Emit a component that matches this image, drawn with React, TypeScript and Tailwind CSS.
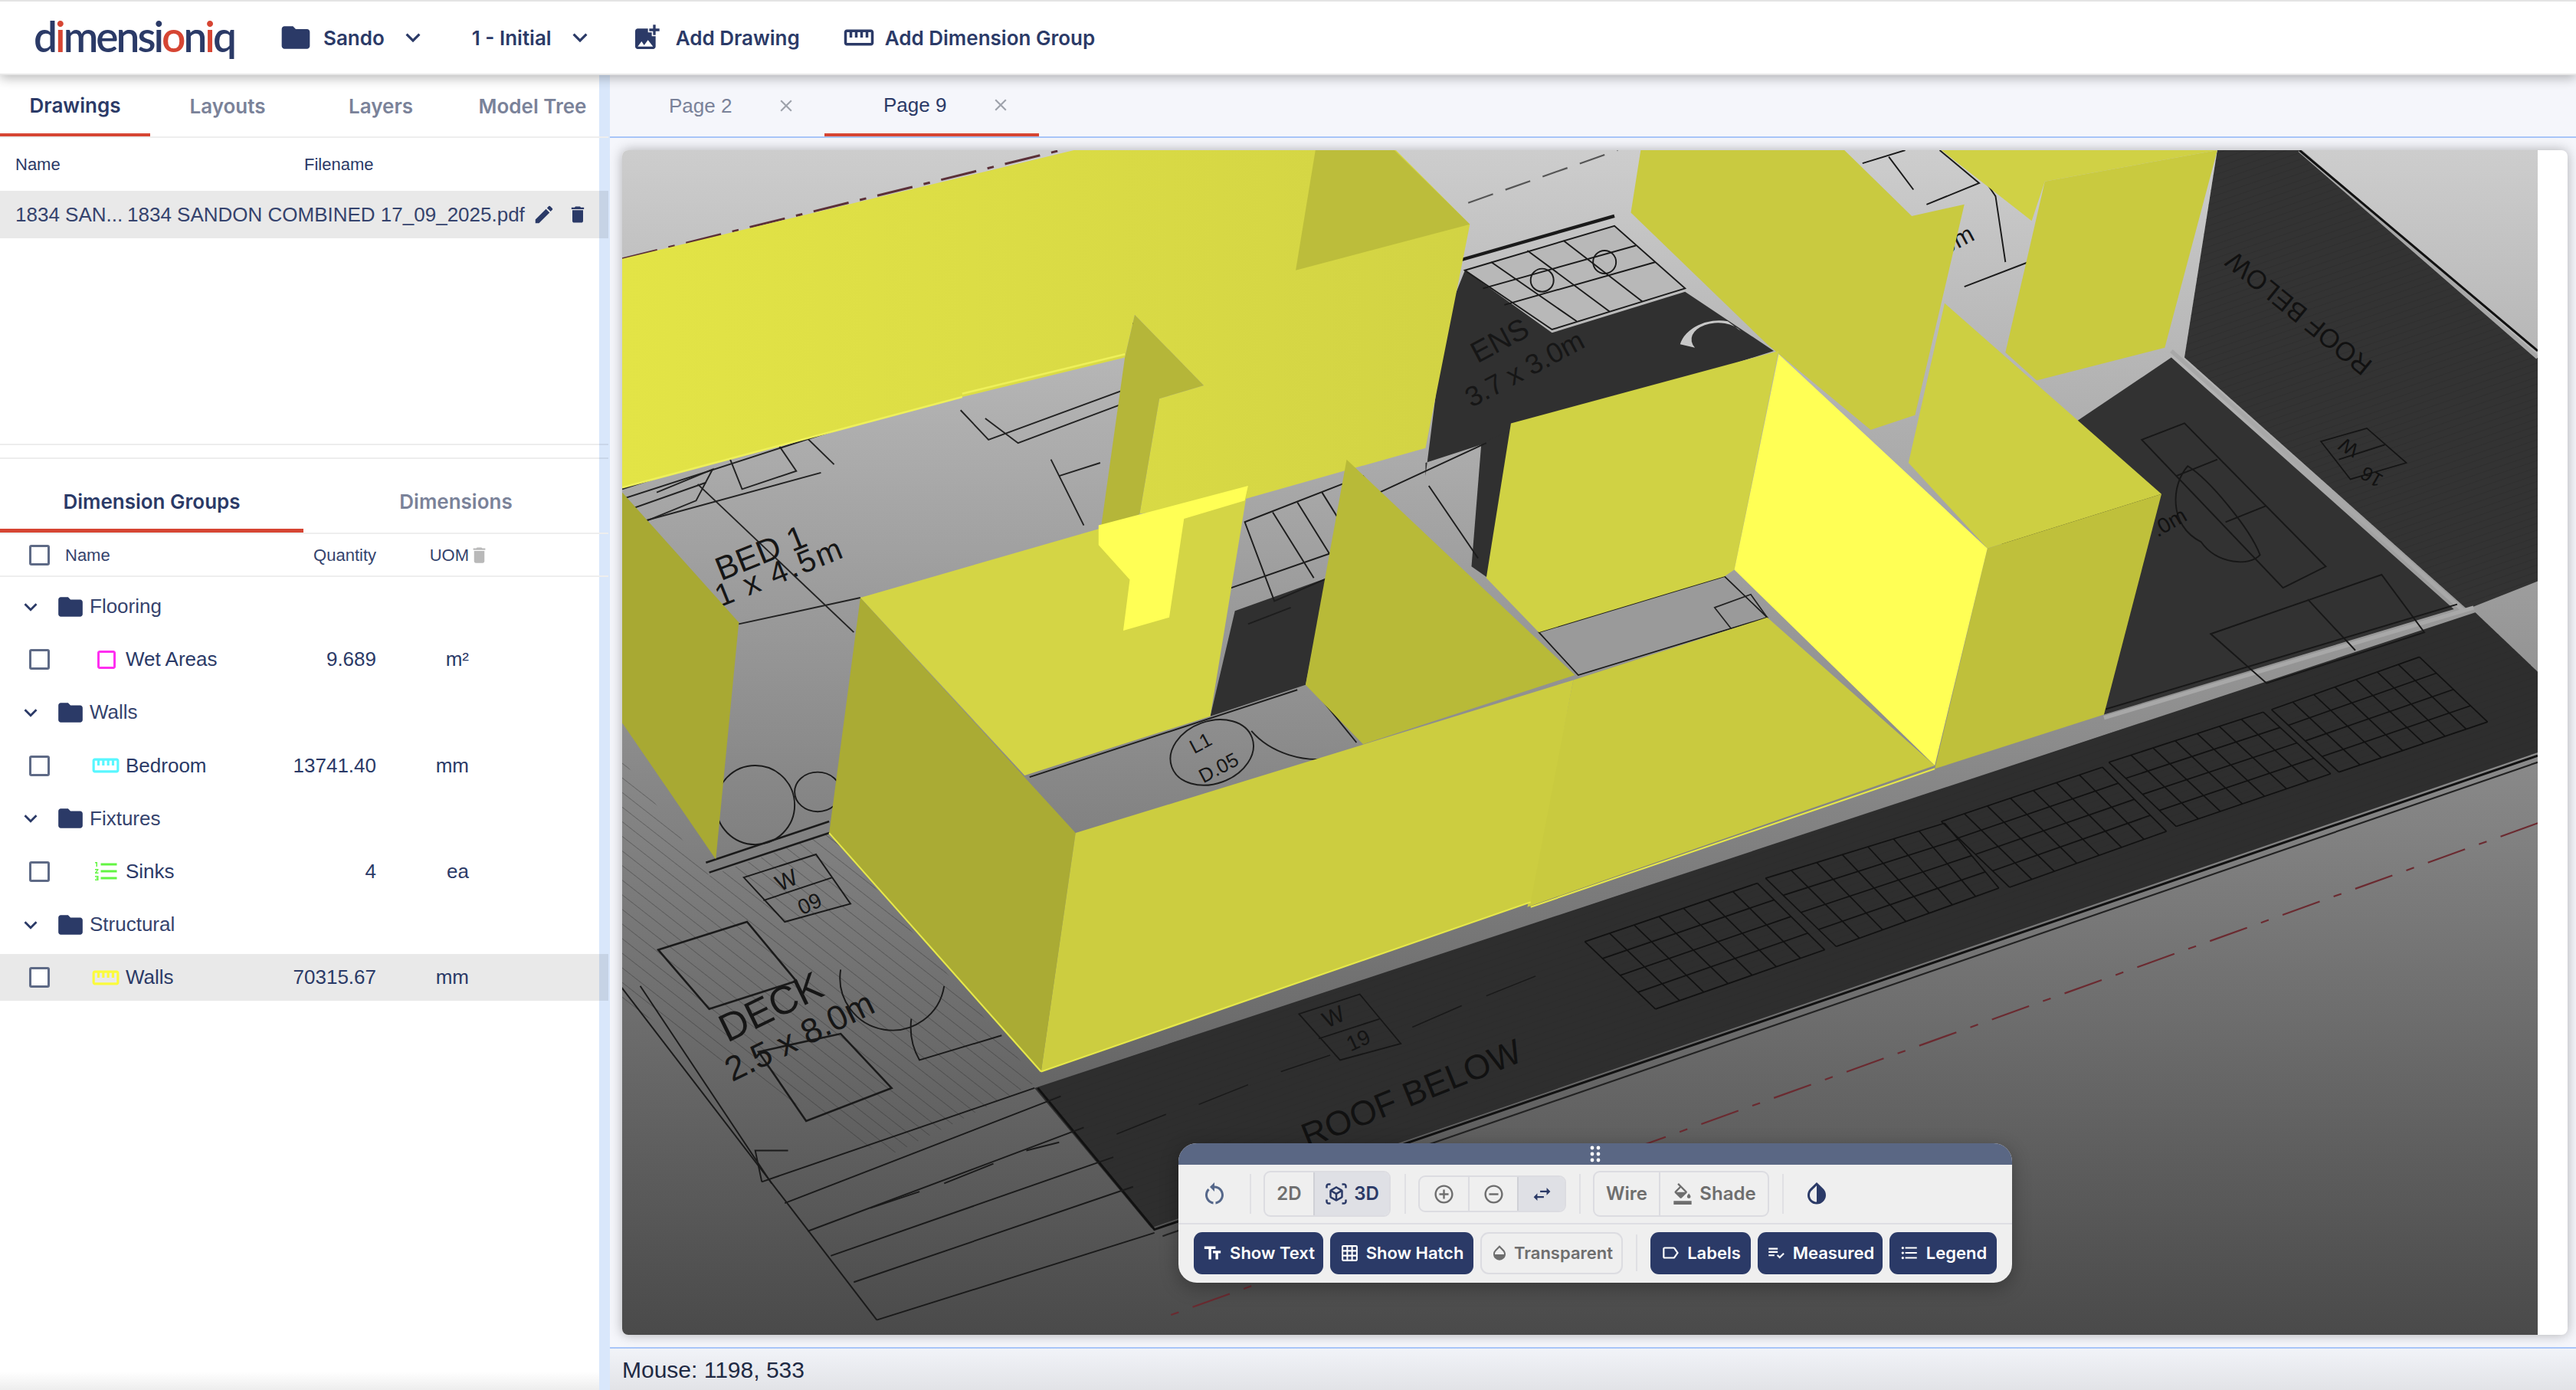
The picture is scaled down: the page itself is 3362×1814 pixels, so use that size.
import {
  MdFolder, MdKeyboardArrowDown, MdOutlineStraighten, MdEdit, MdDelete, MdCropSquare,
  MdFormatListNumbered, MdStraighten, MdRestartAlt, MdOutlineViewInAr, MdAddCircleOutline,
  MdRemoveCircleOutline, MdSwapHoriz, MdFormatColorFill, MdInvertColors, MdTextFields,
  MdGridOn, MdOpacity, MdOutlineLabel, MdPlaylistAddCheck, MdFormatListBulleted, MdClose,
  MdAddPhotoAlternate,
} from "react-icons/md";

const body = "font-['Liberation_Sans',Arial,sans-serif]";
const ui = "font-['Inter',sans-serif]";

// walls, back to front. Coordinates are in the drawing's own space
const backWalls = [
  { p: "999,92 1123,92 1164,132 1196,125 1166,253 1139,262 1076,210 993,130", c: "#c9ca40" },
  { p: "1182,92 1350,92 1245,111 1237,135", c: "#d0d145" },
  { p: "1245,111 1350,92 1318,212 1240,232 1221,215", c: "#c9ca3f" },
];

const frontWalls = [
  { p: "379,300 450,379 436,523 379,440", c: "#a8a933" },
  { p: "920,258 1083,214 1056,347 1050,351 937,385 905,352", c: "#d0d244" },
  { p: "1184,185 1316,301 1210,334 1162,282", c: "#cdcf42" },
  { p: "1210,334 1316,301 1281,435 1178,468", c: "#bfc03b" },
  { p: "524,364 760,296 737,436 624,472", c: "#d4d545" },
  { p: "669,320 760,296 758,305 721,316 712,376 684,384 688,353 669,332", c: "#ffff55" },
  { p: "820,280 959,411 830,453 795,417", c: "#b8ba38" },
  { p: "1083,216 1210,334 1178,466 1056,347", c: "#ffff55" },
  { p: "958,414 1076,376 1178,466 930,552", c: "#c9ca3f" },
  { p: "524,364 655,507 634,652 505,507", c: "#aaab34" },
  { p: "655,507 958,414 932,549 634,652", c: "#cccd40" },
];

const panels = [
  [[965, 573], [1070, 537.5], [1111, 578], [1008, 614]],
  [[1075, 534.5], [1184, 501], [1217, 540.5], [1118, 576]],
  [[1182, 500], [1280, 467], [1319, 506], [1223.5, 540]],
  [[1284, 464], [1378, 433.5], [1419, 471], [1325, 503]],
  [[1383, 432], [1473, 400], [1514.5, 439.5], [1424, 470]],
];

function lerp(a: number[], b: number[], t: number) {
  return [a[0] + (b[0] - a[0]) * t, a[1] + (b[1] - a[1]) * t];
}

function GridPanel({ c, nx = 7, ny = 4 }: { c: number[][]; nx?: number; ny?: number }) {
  const lines = [];
  for (let i = 0; i <= nx; i++) {
    const a = lerp(c[0], c[1], i / nx);
    const b = lerp(c[3], c[2], i / nx);
    lines.push(<line key={`x${i}`} x1={a[0]} y1={a[1]} x2={b[0]} y2={b[1]} />);
  }
  for (let i = 0; i <= ny; i++) {
    const a = lerp(c[0], c[3], i / ny);
    const b = lerp(c[1], c[2], i / ny);
    lines.push(<line key={`y${i}`} x1={a[0]} y1={a[1]} x2={b[0]} y2={b[1]} />);
  }
  return <g stroke="#111" strokeWidth="0.8">{lines}</g>;
}

function Plan() {
  return (
    <svg viewBox="379 92 1166 720" className="w-[2500px] h-full shrink-0" preserveAspectRatio="none">
      <defs>
        <linearGradient id="floor" x1="0" y1="0" x2="0" y2="1">
          <stop offset="0" stopColor="#cdcdcd" />
          <stop offset="1" stopColor="#4a4a4a" />
        </linearGradient>
        <linearGradient id="bigWall" x1="379" y1="0" x2="895" y2="0" gradientUnits="userSpaceOnUse">
          <stop offset="0" stopColor="#e3e446" />
          <stop offset="1" stopColor="#d2d344" />
        </linearGradient>
        <pattern id="boards" width="7" height="7" patternUnits="userSpaceOnUse" patternTransform="rotate(-52)">
          <line x1="0" y1="0" x2="0" y2="7" stroke="#1c1c1c" strokeWidth="0.5" />
        </pattern>
        <pattern id="roof" width="4" height="4" patternUnits="userSpaceOnUse" patternTransform="rotate(-19)">
          <line x1="0" y1="0" x2="4" y2="0" stroke="#2a2a2a" strokeWidth="0.5" />
        </pattern>
      </defs>
      <rect x="379" y="92" width="1166" height="720" fill="url(#floor)" />

      {/* site boundary */}
      <line x1="379" y1="158" x2="646" y2="92" stroke="#5b3038" strokeWidth="1.4" strokeDasharray="22 7 4 7" />
      <line x1="894" y1="124" x2="985" y2="92" stroke="#555" strokeWidth="1" strokeDasharray="16 8" />
      <line x1="1545" y1="501" x2="710" y2="801" stroke="#6b2a30" strokeWidth="1" strokeDasharray="24 9 5 9" />

      {/* dark roof and rooms */}
      <polygon points="1350,92 1400,92 1545,218 1545,354 1502,371 1330,218" fill="#333" />
      <polygon points="1322,218 1494,371 1281,435 1200,300" fill="#323232" />
      <polygon points="630,662 1507,373 1545,409 1545,458 701,747" fill="#2e2e2e" />
      <polygon points="868,290 880,195 892,165 945,203 1026,178 1080,214 905,270 868,282" fill="#303030" />
      <polygon points="902,270 921,262 906,352 896,345" fill="#303030" />
      <polygon points="752,372 808,352 795,417 737,436" fill="#303030" />
      <polygon points="1350,92 1400,92 1545,218 1545,354 1502,371 1330,218" fill="url(#roof)" />
      <polygon points="630,662 1507,373 1545,409 1545,458 701,747" fill="url(#roof)" />

      <g fill="none" stroke="#a8a8a8" strokeWidth="2.4">
        <path d="M1322,214 L1500,372" />
        <path d="M1281,437 L1506,370" />
        <path d="M1400,92 L1545,218" />
      </g>
      <path d="M1400,92 L1545,214 M632,662 L703,748 L1545,460" fill="none" stroke="#111" strokeWidth="1.4" />
      <path d="M708,752 L1545,464" fill="none" stroke="#222" strokeWidth="1" />

      {panels.map((c, i) => <GridPanel key={i} c={c} />)}

      {/* bedroom furniture */}
      <g fill="none" stroke="#222" strokeWidth="0.9">
        <path d="M379,298 L694,196 M379,304 L590,236" />
        <path d="M379,312 L430,294 M390,318 L500,288 M508,283 L470,246 L468,241" />
        <path d="M425,295 L520,385" />
        <path d="M585,250 L602,268 L700,232 L690,212 M600,255 L620,270 L700,240" />
        <path d="M444,278 L470,265 L485,287 L452,298 Z M400,300 L434,286 L424,305 L392,318" />
        <path d="M640,280 L660,320 M645,290 L670,282" />
        <path d="M450,380 L524,364" />
      </g>

      {/* stairs */}
      <g fill="none" stroke="#1d1d1d" strokeWidth="0.9">
        <path d="M758,318 L830,290 L860,330 L776,366 Z" />
        <path d="M775,312 L800,352 M790,306 L815,346 M805,300 L830,340 M820,296 L846,334" />
        <path d="M744,360 L816,335 M760,380 L786,370" />
        <path d="M870,296 L900,340 M840,300 L905,270" />
      </g>

      {/* ensuite */}
      <polygon points="892,165 983,138 1026,176 945,201" fill="#b8b8b8" />
      <g fill="none" stroke="#1a1a1a" strokeWidth="0.9">
        <path d="M892,165 L983,138 L1026,176 L945,201 Z" />
        <path d="M908,160 L960,196 M930,153 L980,190 M952,147 L1000,184 M903,176 L996,150 M916,186 L1008,160" />
        <circle cx="939" cy="171" r="7" />
        <circle cx="977" cy="160" r="7" />
        <path d="M885,160 L983,132" strokeWidth="2" />
      </g>
      <path d="M1023,210 A22,16 -10 0 1 1052,196 L1060,202 A16,10 0 0 0 1032,212 Z" fill="#c8c8c8" />

      {/* bedroom 2 at the top */}
      <g fill="none" stroke="#1a1a1a" strokeWidth="0.9">
        <path d="M1134,100 L1160,92 M1150,96 L1165,116 M1181,92 L1205,112 L1173,125" />
        <path d="M1196,92 L1215,120 L1221,160 M1196,175 L1235,160" />
      </g>

      {/* living room furniture */}
      <g fill="none" stroke="#171717" strokeWidth="0.9">
        <path d="M1304,268 L1330,258 L1416,345 L1390,358 Z M1325,290 L1350,280 M1355,318 L1380,308" />
        <path d="M1340,330 C1320,320 1322,295 1332,284 C1345,292 1370,322 1376,338 C1370,345 1350,344 1340,330 Z" />
        <path d="M1346,386 L1450,350 L1476,385 L1380,416 Z M1405,365 L1434,396" />
        <path d="M1281,432 L1496,368" />
        <path d="M1190,430 L1210,428" />
      </g>

      {/* small room between the walls */}
      <path d="M937,385 L1050,351 L1076,376 L961,411 Z" fill="#9a9a9a" stroke="#1a1a1a" strokeWidth="0.8" />
      <path d="M1044,370 L1066,362 L1076,376 L1055,384 Z" fill="none" stroke="#222" strokeWidth="0.8" />

      {/* door tag */}
      <g fill="none" stroke="#1d1d1d" strokeWidth="0.9">
        <ellipse cx="738" cy="458" rx="26" ry="19" transform="rotate(-20 738 458)" />
        <path d="M762,445 C775,460 795,463 806,462" />
        <path d="M627,473 L790,420 M800,420 L826,452" />
      </g>

      {/* deck */}
      <polygon points="379,462 432,533 505,507 632,658 540,704 379,610" fill="url(#boards)" opacity="0.55" />
      <g fill="none" stroke="#1a1a1a" strokeWidth="0.9">
        <circle cx="460" cy="490" r="24" />
        <ellipse cx="498" cy="482" rx="14" ry="12" />
        <path d="M432,531 L505,507 M430,525 L505,500" strokeWidth="1.2" />
        <path d="M453,534 L497,520 L518,550 L478,561 Z M465,548 L507,534" />
        <path d="M401,578 L455,561 L485,597 L432,614 Z" strokeWidth="1.2" />
        <path d="M462,640 L512,629 L543,662 L491,682 Z" strokeWidth="1.2" />
        <path d="M512,590 A30,30 0 0 0 575,600 M555,620 A40,40 0 0 0 560,645 L610,630" />
        <path d="M464,719 L630,662 M478,732 L646,667 M492,749 L660,686 M506,764 L678,704 M520,780 L690,722 M534,803 L703,750" />
        <path d="M378,600 L534,803" />
        <path d="M390,600 L470,720 M464,719 L460,700 L480,700" />
        <path d="M530,735 L560,725 M575,720 L605,708 M625,700 L645,695" />
      </g>
      <path d="M791,617 L828,605 L853,635 L816,645 Z M803,632 L840,620" fill="none" stroke="#161616" strokeWidth="0.8" />
      <path d="M1413,269 L1441,261 L1465,282 L1431,292 Z M1424,280 L1452,271" fill="none" stroke="#141414" strokeWidth="0.8" />

      {/* dimension lines across the lower roof */}
      <path d="M680,690 L710,678 M730,672 L760,660 M780,652 L810,642 M860,625 L890,612 M905,606 L935,594" fill="none" stroke="#191919" strokeWidth="0.7" />

      <g fontFamily="'Liberation Sans',Arial,sans-serif" fill="#161616" textAnchor="middle">
        <text transform="translate(466,343) rotate(-22)" fontSize="20">BED 1</text>
        <text transform="translate(468,358) rotate(-22)" fontSize="19" textLength="100">5.1 x 4.5m</text>
        <text transform="translate(916,213) rotate(-28)" fontSize="18">ENS</text>
        <text transform="translate(931,230) rotate(-28)" fontSize="17">3.7 x 3.0m</text>
        <text transform="translate(1192,152) rotate(-28)" fontSize="15">.0m</text>
        <text transform="translate(1323,322) rotate(-30)" fontSize="13" fill="#111">.0m</text>
        <text transform="translate(733,456) rotate(-28)" fontSize="12">L1</text>
        <text transform="translate(744,471) rotate(-28)" fontSize="12">D.05</text>
        <text transform="translate(481,540) rotate(-25)" fontSize="14">W</text>
        <text transform="translate(495,554) rotate(-25)" fontSize="13">09</text>
        <text transform="translate(473,620) rotate(-26)" fontSize="24">DECK</text>
        <text transform="translate(490,637) rotate(-26)" fontSize="21">2.5 x 8.0m</text>
        <text transform="translate(814,623) rotate(-25)" fontSize="14" fill="#141414">W</text>
        <text transform="translate(829,637) rotate(-25)" fontSize="13" fill="#141414">19</text>
        <text transform="translate(862,672) rotate(-22)" fontSize="21" fill="#111">ROOF BELOW</text>
        <text transform="translate(1403,187) rotate(-141)" fontSize="16" fill="#111">ROOF BELOW</text>
        <text transform="translate(1432,269) rotate(-150)" fontSize="12" fill="#111">W</text>
        <text transform="translate(1446,287) rotate(-150)" fontSize="12" fill="#111">16</text>
      </g>

      {/* extruded walls */}
      {backWalls.map((w) => <polygon key={w.p} points={w.p} fill={w.c} />)}
      <polygon
        points="379,158 654,92 850,92 895,137 868,273 758,304 694,313 706,243 733,235 691,192 685,218 586,242 379,297"
        fill="url(#bigWall)"
      />
      <polygon points="801,92 849,92 895,137 789,165" fill="#bcbd3b" />
      <polygon points="691,192 733,235 706,243 694,313 669,332 685,218" fill="#b5b639" />
      <path d="M379,297 L586,242 M586,240 L685,216" stroke="#eef05a" strokeWidth="1.2" fill="none" />
      {frontWalls.map((w) => <polygon key={w.p} points={w.p} fill={w.c} />)}
      <path d="M634,652 L932,549 M932,552 L1178,468 M505,507 L634,652" stroke="#e6e84a" strokeWidth="1" fill="none" />
    </svg>
  );
}

function Cell({ className, children }: { className: string; children?: React.ReactNode }) {
  return <div className={className}>{children}</div>;
}

function Check() {
  return <div className="w-[27px] h-[27px] ml-[38px] shrink-0 rounded-[3px] border-[3px] border-[#5e6a86] bg-white" />;
}

function FolderRow({ name }: { name: string }) {
  return (
    <div className="flex items-center h-[61px] mb-[8.2px]">
      <MdKeyboardArrowDown size={34} className="ml-[23px] text-[#2b3a67] shrink-0" />
      <MdFolder size={38} className="ml-[16px] text-[#2b3a67] shrink-0" />
      <span className="ml-[6px] text-[26px] text-[#35436d]">{name}</span>
    </div>
  );
}

function ItemRow({ icon, name, qty, uom, active }: { icon: React.ReactNode; name: string; qty: string; uom: string; active?: boolean }) {
  return (
    <div className={`flex items-center h-[61px] mb-[8.2px] w-[794px] ${active ? "bg-black/[.085]" : ""}`}>
      <Check />
      <div className="w-[99px] pl-[20px] pr-[7px] flex justify-end shrink-0">{icon}</div>
      <span className="text-[26px] text-[#2b3a67] w-[200px]">{name}</span>
      <span className="text-[26px] text-[#2b3a67] w-[127px] text-right">{qty}</span>
      <span className="text-[26px] text-[#2b3a67] w-[121px] text-right">{uom}</span>
    </div>
  );
}

function Sep({ h = "h-[52px]" }: { h?: string }) {
  return <div className={`w-[2px] ${h} bg-[#e0e0e4] shrink-0`} />;
}

function DarkBtn({ w, icon, label }: { w: string; icon: React.ReactNode; label: string }) {
  return (
    <button className={`${w} h-[55px] rounded-[11px] bg-[#2b3a67] text-white flex items-center justify-center gap-[9px] text-[22px] font-semibold shrink-0`}>
      {icon}
      {label}
    </button>
  );
}

export default function App() {
  return (
    <div className={`w-[3362px] h-[1814px] overflow-hidden flex flex-col bg-white ${body}`}>
      {/* top bar */}
      <header className={`relative z-20 h-[98px] shrink-0 flex items-center border-t-2 border-[#e4e4e4] border-b-2 border-b-[#e8e8e8] bg-white shadow-[0_4px_14px_rgba(0,0,0,0.28)] ${ui} text-[#2b3a67] font-semibold text-[26px]`}>
        <div className="ml-[44px] w-[270px] text-[55px] leading-none font-['Lato',sans-serif] font-semibold tracking-[-3px] -mt-[4px] whitespace-nowrap">
          d<span className="text-[#d64533]">i</span>mensi<span className="text-[#d64533]">o</span>n<span className="text-[#d64533]">i</span>q
        </div>
        <MdFolder size={44} className="ml-[50px] -mr-[4px]" />
        <span className="ml-[18px]">Sando</span>
        <MdKeyboardArrowDown size={38} className="ml-[18px]" />
        <span className="ml-[58px]">1 - Initial</span>
        <MdKeyboardArrowDown size={38} className="ml-[18px]" />
        <MdAddPhotoAlternate size={40} className="ml-[48px]" />
        <span className="ml-[18px]">Add Drawing</span>
        <MdOutlineStraighten size={42} className="ml-[56px]" />
        <span className="ml-[13px]">Add Dimension Group</span>
      </header>

      <div className="flex flex-1 min-h-0">
        {/* left panel */}
        <aside className="relative w-[796px] shrink-0 flex flex-col bg-[linear-gradient(to_right,#ffffff_782px,#d9e7fb_782px)]">
          <div className={`flex h-[82px] w-[794px] shrink-0 border-b-2 border-[#eeeeee] text-[26px] font-semibold text-[#7a8299] ${ui}`}>
            <div className="w-[196px] flex items-center justify-center text-[#2b3a67] border-b-4 border-[#d64533] pt-[2px]">Drawings</div>
            <div className="w-[202px] flex items-center justify-center">Layouts</div>
            <div className="w-[198px] flex items-center justify-center">Layers</div>
            <div className="w-[198px] flex items-center justify-center whitespace-nowrap">Model Tree</div>
          </div>

          <div className="flex items-center h-[69px] shrink-0 text-[22px] text-[#2b3a67]">
            <Cell className="w-[397px] pl-[20px]">Name</Cell>
            <Cell className="">Filename</Cell>
          </div>
          <div className="flex items-center h-[62px] w-[794px] shrink-0 bg-black/[.085] text-[26px] text-[#35436d] whitespace-nowrap">
            <span className="w-[166px] pl-[20px] shrink-0">1834 SAN...</span>
            <span className="w-[532px] shrink-0">1834 SANDON COMBINED 17_09_2025.pdf</span>
            <MdEdit size={30} className="text-[#2b3a67] -ml-[3px] shrink-0" />
            <MdDelete size={28} className="text-[#2b3a67] ml-[15px] shrink-0" />
          </div>

          <div className="h-[268px] shrink-0" />
          <div className="h-[2px] w-[794px] bg-black/[.07] shrink-0" />
          <div className="h-[16px] shrink-0" />
          <div className="h-[2px] w-[794px] bg-black/[.07] shrink-0" />

          <div className={`flex h-[98px] w-[794px] shrink-0 border-b-2 border-[#eeeeee] text-[26px] font-semibold text-[#7a8299] ${ui}`}>
            <div className="w-[396px] flex items-center justify-center text-[#2b3a67] border-b-[5px] border-[#d64533] pt-[19px]">Dimension Groups</div>
            <div className="flex-1 flex items-center justify-center pt-[14px]">Dimensions</div>
          </div>

          <div className="flex items-center h-[56px] w-[794px] shrink-0 border-b-2 border-[#eeeeee] text-[22px] text-[#35436d]">
            <Check />
            <span className="ml-[20px] w-[280px]">Name</span>
            <span className="w-[126px] text-right">Quantity</span>
            <span className="w-[121px] text-right">UOM</span>
            <MdDelete size={27} className="text-[#b9b9b9]" />
          </div>

          <div className="pt-[8px]">
            <FolderRow name="Flooring" />
            <ItemRow name="Wet Areas" qty="9.689" uom="m²" icon={<MdCropSquare size={36} className="text-[#ff2ef0]" />} />
            <FolderRow name="Walls" />
            <ItemRow name="Bedroom" qty="13741.40" uom="mm" icon={<MdStraighten size={38} className="text-[#58f7ff]" />} />
            <FolderRow name="Fixtures" />
            <ItemRow name="Sinks" qty="4" uom="ea" icon={<MdFormatListNumbered size={36} className="text-[#62f542]" />} />
            <FolderRow name="Structural" />
            <ItemRow active name="Walls" qty="70315.67" uom="mm" icon={<MdStraighten size={38} className="text-[#fbfb3c]" />} />
          </div>

          <div className="absolute bottom-0 left-0 w-[782px] h-[24px] bg-gradient-to-t from-black/[.07] to-transparent" />
        </aside>

        {/* viewer */}
        <main className="flex-1 min-w-0 flex flex-col bg-[#f5f6fb]">
          <div className="flex h-[82px] shrink-0 border-b-2 border-[#a8c5f8] text-[26px]">
            <div className="w-[280px] flex items-center pl-[77px] text-[#7a8299]">
              Page 2
              <MdClose size={26} className="ml-[58px] text-[#9ea2ab]" />
            </div>
            <div className="w-[280px] flex items-center pl-[77px] text-[#2b3a67] border-b-4 border-[#d64533] pt-[2px]">
              Page 9
              <MdClose size={26} className="ml-[58px] text-[#9ea2ab]" />
            </div>
          </div>

          <div className="relative ml-[16px] mt-[16px] h-[1546px] w-[2539px] shrink-0 rounded-[8px] overflow-hidden bg-white shadow-[0_0_16px_rgba(0,0,0,0.3)]">
            <Plan />

            {/* floating toolbar */}
            <div className={`absolute left-[726px] top-[1296px] w-[1088px] h-[182px] rounded-[24px] overflow-hidden flex flex-col bg-[#efefef] shadow-[0_6px_24px_rgba(0,0,0,0.3)] ${ui}`}>
              <div className="h-[28px] shrink-0 bg-[#5a6784] flex items-center justify-center">
                <svg width="14" height="24" viewBox="0 0 14 24" fill="#fff">
                  <circle cx="3" cy="4" r="2.4" /><circle cx="11" cy="4" r="2.4" />
                  <circle cx="3" cy="12" r="2.4" /><circle cx="11" cy="12" r="2.4" />
                  <circle cx="3" cy="20" r="2.4" /><circle cx="11" cy="20" r="2.4" />
                </svg>
              </div>
              <div className="h-[78px] shrink-0 flex items-center border-b-2 border-[#dedee3]">
                <div className="w-[93px] flex justify-center text-[#55678a] shrink-0">
                  <MdRestartAlt size={36} />
                </div>
                <Sep />
                <div className="ml-[16px] w-[166px] h-[60px] rounded-[9px] border-2 border-[#dcdce1] flex overflow-hidden shrink-0 text-[24px] font-semibold">
                  <div className="w-[63px] flex items-center justify-center text-[#6e6e6e]">2D</div>
                  <div className="flex-1 flex items-center justify-center gap-[8px] text-[#2b3a67] bg-[#dfe0e5] border-l-2 border-[#cfd0d6]">
                    <MdOutlineViewInAr size={30} />3D
                  </div>
                </div>
                <div className="ml-[18px]"><Sep /></div>
                <div className="ml-[16px] w-[193px] h-[48px] rounded-[9px] border-2 border-[#dcdce1] flex overflow-hidden shrink-0 text-[#6e6e6e]">
                  <div className="w-[63px] flex items-center justify-center"><MdAddCircleOutline size={29} /></div>
                  <div className="w-[64px] flex items-center justify-center border-l-2 border-[#dcdce1]"><MdRemoveCircleOutline size={29} /></div>
                  <div className="flex-1 flex items-center justify-center bg-[#dfe0e5] border-l-2 border-[#cfd0d6] text-[#2b3a67]"><MdSwapHoriz size={29} /></div>
                </div>
                <div className="ml-[17px]"><Sep /></div>
                <div className="ml-[16px] w-[230px] h-[60px] rounded-[9px] border-2 border-[#dcdce1] flex overflow-hidden shrink-0 text-[24px] font-semibold text-[#6e6e6e]">
                  <div className="w-[84px] flex items-center justify-center">Wire</div>
                  <div className="flex-1 flex items-center justify-center gap-[8px] border-l-2 border-[#dcdce1]">
                    <MdFormatColorFill size={28} />Shade
                  </div>
                </div>
                <div className="ml-[17px]"><Sep /></div>
                <MdInvertColors size={36} className="ml-[25px] text-[#2b3a67]" />
              </div>
              <div className="flex items-center h-[74px] pl-[20px] gap-[9px]">
                <DarkBtn w="w-[169px]" label="Show Text" icon={<MdTextFields size={27} />} />
                <DarkBtn w="w-[187px]" label="Show Hatch" icon={<MdGridOn size={25} />} />
                <button className="w-[186px] h-[55px] rounded-[11px] border-2 border-[#dcdce1] text-[#6e6e6e] flex items-center justify-center gap-[7px] text-[22px] font-semibold shrink-0">
                  <MdOpacity size={24} />
                  Transparent
                </button>
                <div className="ml-[8px] mr-[8px]"><Sep h="h-[48px]" /></div>
                <DarkBtn w="w-[131px]" label="Labels" icon={<MdOutlineLabel size={26} />} />
                <DarkBtn w="w-[163px]" label="Measured" icon={<MdPlaylistAddCheck size={26} />} />
                <DarkBtn w="w-[140px]" label="Legend" icon={<MdFormatListBulleted size={26} />} />
              </div>
            </div>
          </div>

          <div className="mt-[16px] flex-1 border-t-2 border-[#a8c5f8] flex items-center pl-[16px] text-[30px] text-[#1f2a44] bg-gradient-to-b from-[#f1f3f8] to-[#e2e3e7]">
            Mouse: 1198, 533
          </div>
        </main>
      </div>
    </div>
  );
}
